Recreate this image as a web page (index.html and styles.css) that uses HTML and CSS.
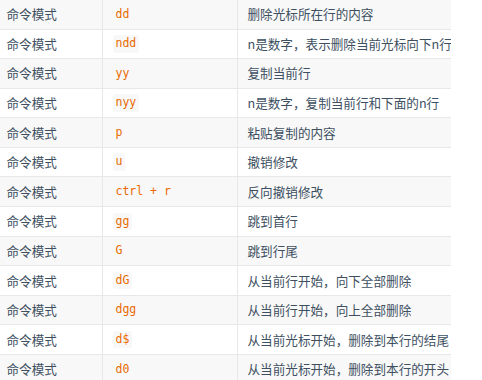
FILE: index.html
```html
<!DOCTYPE html>
<html lang="zh-CN">
<head>
<meta charset="utf-8">
<link rel="stylesheet" href="styles.css">
</head>
<body>
<div class="wrap">
<table class="cmd-table">
<tbody>
<tr><td>命令模式</td><td><code>dd</code></td><td>删除光标所在行的内容</td></tr>
<tr><td>命令模式</td><td><code>ndd</code></td><td>n是数字，表示删除当前光标向下n行</td></tr>
<tr><td>命令模式</td><td><code>yy</code></td><td>复制当前行</td></tr>
<tr><td>命令模式</td><td><code>nyy</code></td><td>n是数字，复制当前行和下面的n行</td></tr>
<tr><td>命令模式</td><td><code>p</code></td><td>粘贴复制的内容</td></tr>
<tr><td>命令模式</td><td><code>u</code></td><td>撤销修改</td></tr>
<tr><td>命令模式</td><td><code>ctrl + r</code></td><td>反向撤销修改</td></tr>
<tr><td>命令模式</td><td><code>gg</code></td><td>跳到首行</td></tr>
<tr><td>命令模式</td><td><code>G</code></td><td>跳到行尾</td></tr>
<tr><td>命令模式</td><td><code>dG</code></td><td>从当前行开始，向下全部删除</td></tr>
<tr><td>命令模式</td><td><code>dgg</code></td><td>从当前行开始，向上全部删除</td></tr>
<tr><td>命令模式</td><td><code>d$</code></td><td>从当前光标开始，删除到本行的结尾</td></tr>
<tr><td>命令模式</td><td><code>d0</code></td><td>从当前光标开始，删除到本行的开头</td></tr>
</tbody>
</table>
</div>
</body>
</html>
```

FILE: styles.css
```css
html, body {
  margin: 0;
  padding: 0;
  background: #fff;
}
body {
  font-family: "Noto Sans CJK SC", "Noto Sans", sans-serif;
  font-size: 12.6px;
  color: #3d4f61;
  overflow: hidden;
}
.wrap {
  width: 451px;
  overflow: hidden;
}
.cmd-table {
  display: block;
  margin-left: -4px;
  margin-top: -1.1px;
}
.cmd-table tbody {
  display: grid;
  grid-template-columns: 106px 135px 235px;
  grid-auto-rows: 29.6px;
}
.cmd-table tr {
  display: contents;
}
.cmd-table td {
  display: flex;
  align-items: center;
  box-sizing: border-box;
  border-top: 1px solid #e8e8e8;
  border-left: 1px solid #e8e8e8;
  padding: 0 9px 0 9.5px;
  line-height: 18px;
  white-space: nowrap;
}
.cmd-table tr:nth-child(odd) td {
  background: #f8f8f8;
}
.cmd-table code {
  display: inline-block;
  font-family: "DejaVu Sans Mono", monospace;
  font-size: 11.5px;
  line-height: 13.4px;
  color: #e96900;
  background: #f8f8f8;
  border-radius: 2px;
  padding: 2px 3px;
}
```
